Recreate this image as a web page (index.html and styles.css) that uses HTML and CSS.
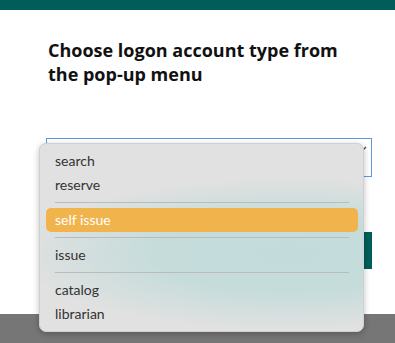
FILE: index.html
```html
<!DOCTYPE html>
<html lang="en">
<head>
    <meta charset="UTF-8">
    <meta name="viewport" content="width=device-width, initial-scale=1.0">
    <title>Logon</title>
    <link rel="stylesheet" href="styles.css">
</head>
<body>
    <div class="topbar"></div>
    <main class="sheet">
        <h1 class="title">Choose logon account type from the pop-up menu</h1>
        <div class="field">
            <div class="select-box">
                <svg class="arrow" width="8" height="6" viewBox="0 0 8 6"><path d="M1 1 L4 4 L7 1" fill="none" stroke="#444" stroke-width="1.3"/></svg>
            </div>
            <button class="go" type="button">Next</button>

            <!-- pop-up menu -->
            <ul class="menu">
                <li>search</li>
                <li>reserve</li>
                <li class="sep"></li>
                <li class="active">self issue</li>
                <li class="sep"></li>
                <li>issue</li>
                <li class="sep"></li>
                <li>catalog</li>
                <li>librarian</li>
            </ul>
        </div>
    </main>
    <footer class="bottom"></footer>
</body>
</html>
```

FILE: styles.css
```css
body {
    margin: 0;
    padding: 0;
    background-color: #ffffff;
    font-family: "Open Sans", sans-serif;
    overflow: hidden;
}

.topbar {
    height: 10px;
    background-color: #005e5a;
}

.sheet {
    padding: 28px 23px 45px 46px;
}

.title {
    margin: 0 0 52px 2px;
    font-size: 18px;
    line-height: 24px;
    font-weight: 700;
    color: #111111;
    width: 300px;
}

.field {
    position: relative;
}

.select-box {
    border: 1px solid #5b9bdc;
    display: flex;
    justify-content: flex-end;
    align-items: flex-start;
    padding: 7px 4px 0 0;
    box-sizing: border-box;
    height: 39px;
}

.go {
    display: block;
    width: 100%;
    height: 37px;
    margin-top: 55px;
    border: none;
    background-color: #005e5a;
    color: white;
    font-size: 15px;
}

.menu {
    position: absolute;
    left: -7px;
    top: 5px;
    width: 325px;
    box-sizing: border-box;
    margin: 0;
    padding: 5px 5px 5px 6px;
    list-style: none;
    border-radius: 7px;
    border: 1px solid #cfd0cf;
    background:
        radial-gradient(ellipse 270px 75px at 250px 110px, #c3dcdb 0%, #c5dcdb 50%, rgba(224, 225, 224, 0) 100%),
        #e0e1e0;
    box-shadow: 0 2px 6px rgba(0, 0, 0, 0.25);
    font-family: Lato, sans-serif;
    font-size: 14px;
    color: #333333;
}

.menu li {
    height: 24px;
    line-height: 24px;
    padding-left: 9px;
}

.menu .sep {
    height: 1px;
    padding: 0;
    margin: 5px 9px;
    background-color: #b9bcbb;
}

.menu .active {
    background-color: #f1b44d;
    color: #ffffff;
    border-radius: 5px;
}

.bottom {
    height: 29px;
    background-color: #767676;
}
```
